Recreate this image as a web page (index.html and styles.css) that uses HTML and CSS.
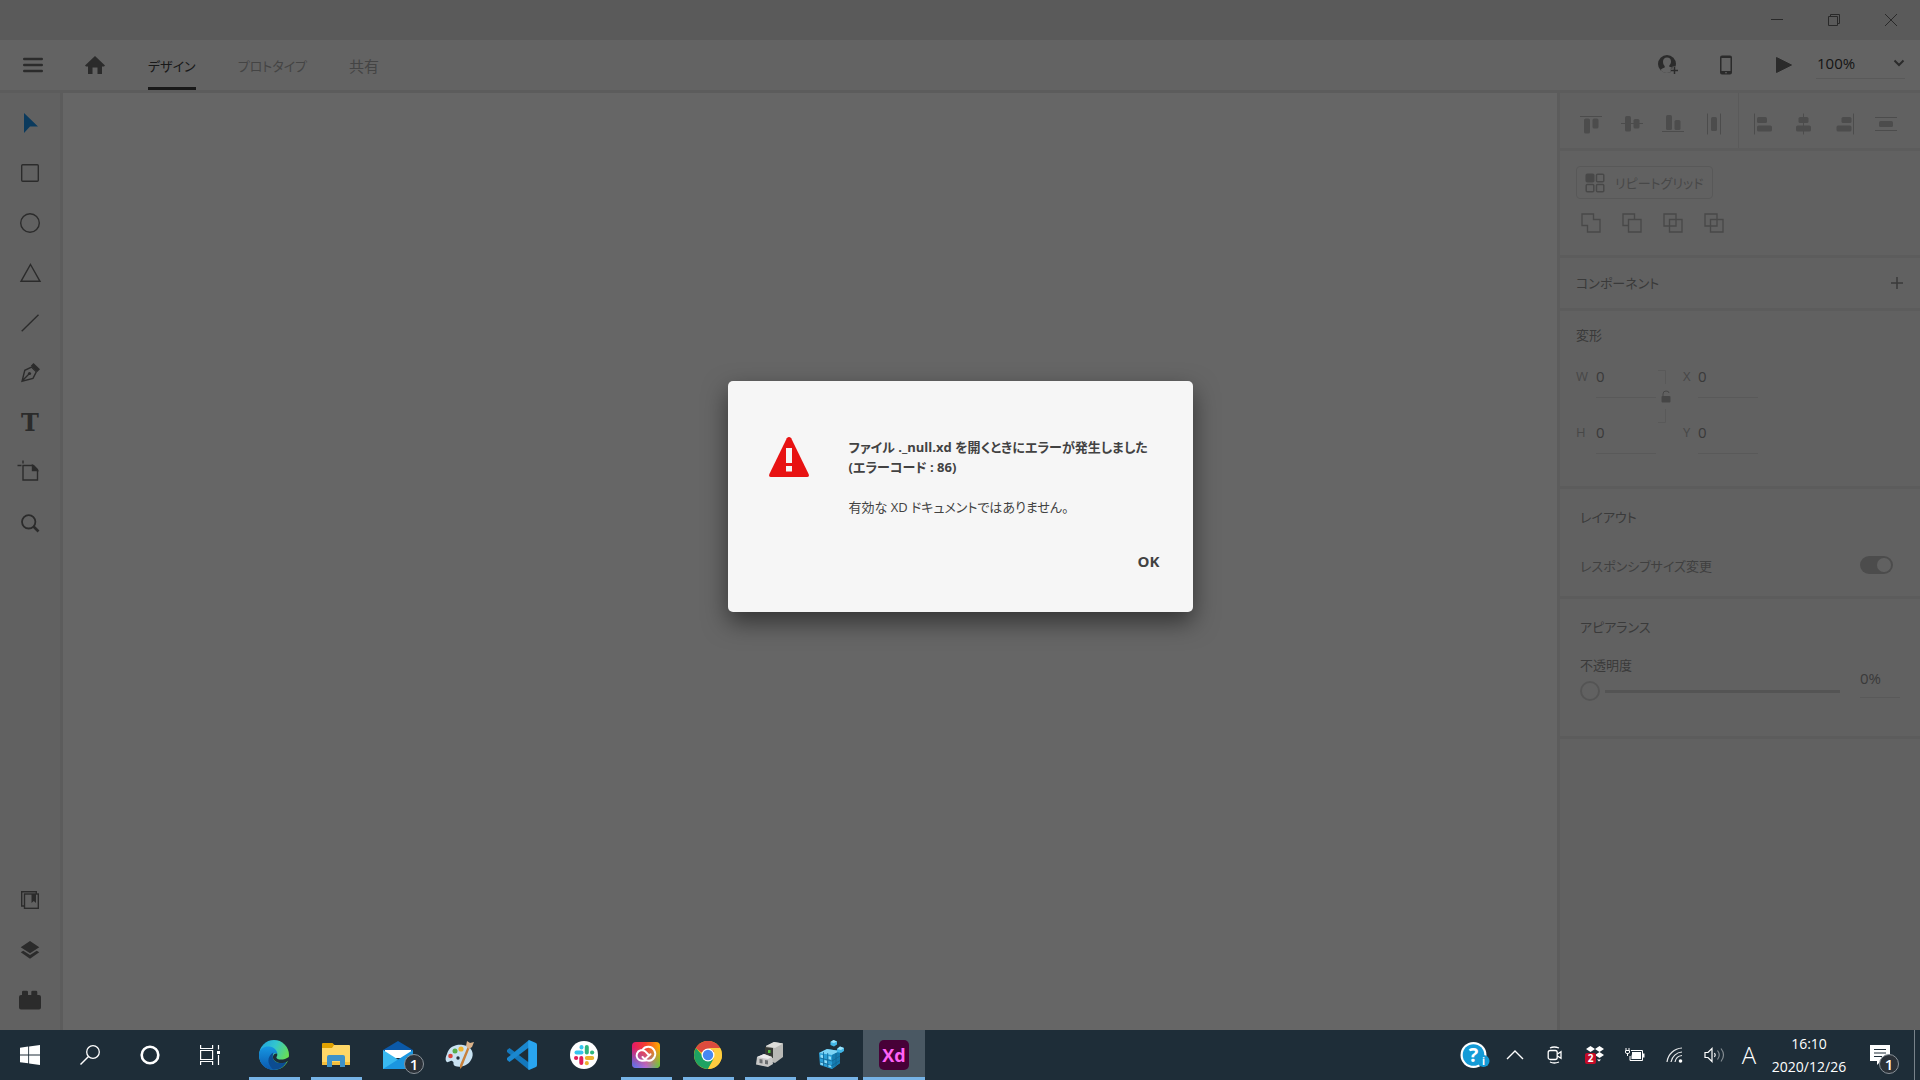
FILE: index.html
```html
<!DOCTYPE html>
<html lang="ja">
<head>
  <meta charset="UTF-8" />
  <meta name="viewport" content="width=device-width, initial-scale=1.0"/>
  <title>Adobe XD</title>
  <link rel="stylesheet" href="styles.css">
</head>
<body>

  <div class="app">
    <!-- Window title bar -->
    <div class="titlebar">
      <button aria-label="最小化"><svg width="14" height="14" viewBox="0 0 14 14"><path d="M1 6.500h12"/></svg></button>
      <button aria-label="元に戻す"><svg width="14" height="14" viewBox="0 0 14 14"><path d="M1.500 3.500h9v9h-9zM3.500 3.500v-2h9v9h-2"/></svg></button>
      <button aria-label="閉じる"><svg width="14" height="14" viewBox="0 0 14 14"><path d="M1 1l12 12M13 1L1 13"/></svg></button>
    </div>

    <!-- Header -->
    <header class="header">
      <button class="icon-btn menu-btn" aria-label="メニュー"><svg width="20" height="16" viewBox="0 0 20 16"><path d="M1.200 2h17.600M1.200 8h17.600M1.200 14h17.600" fill="none" stroke="currentColor" stroke-width="2.400" stroke-linecap="round"/></svg></button>
      <button class="icon-btn home-btn" aria-label="ホーム"><svg width="20" height="18" viewBox="0 0 20 18"><path d="M10 0L20 9.600l-1 1h-2V18h-4.500v-6.500h-5V18H3v-7.400H1l-1-1z" fill="currentColor"/></svg></button>
      <nav class="tabs">
        <a href="#" class="active">デザイン</a>
        <a href="#">プロトタイプ</a>
        <a href="#" class="share">共有</a>
      </nav>
      <div class="header-right">
        <button class="icon-btn" aria-label="招待"><svg width="22" height="22" viewBox="0 0 22 22"><circle cx="10" cy="10" r="9" fill="currentColor"/><path d="M10 3.500c-2.500 0-4 1.800-4 4.300 0 1.800.7 3.300 1.700 4.100v1.500c-1.500.7-3.400 1.200-4.200 2.500 1.500 1.800 4 3 6.500 3l3.500-.6v-3.500l2-1-3.200-1.100v-1.300c1-.9 1.700-2.300 1.700-3.900 0-2.500-1.500-4-4-4z" fill="#f7f7f7"/><path d="M17.500 12.500v8M13.500 16.500h8" stroke="#f7f7f7" stroke-width="4"/><path d="M17.500 13v7M14 16.500h7" stroke="currentColor" stroke-width="1.500"/></svg></button>
        <button class="icon-btn" aria-label="デバイスプレビュー"><svg width="12" height="20" viewBox="0 0 12 20"><path fill-rule="evenodd" d="M2 .5h8a2 2 0 0 1 2 2v15a2 2 0 0 1-2 2H2a2 2 0 0 1-2-2v-15a2 2 0 0 1 2-2zM1.500 3v13h9V3zM5 17.200v1h2v-1z" fill="currentColor"/></svg></button>
        <button class="icon-btn" aria-label="プレビュー"><svg width="18" height="18" viewBox="0 0 18 18"><path d="M1.500 1.500v15L16.500 9z" fill="currentColor" stroke="currentColor" stroke-linejoin="round"/></svg></button>
        <div class="zoom">
          <select aria-label="ズーム"><option>100%</option></select>
          <svg width="12" height="8" viewBox="0 0 12 8"><path d="M1.500 1.500L6 6l4.500-4.500" fill="none" stroke="currentColor" stroke-width="2"/></svg>
        </div>
      </div>
    </header>

    <div class="workspace">
      <!-- Tools -->
      <aside class="toolbar">
        <button class="selected" aria-label="選択"><svg width="24" height="24" viewBox="0 0 24 24"><path d="M6 2v20l6-6.600h8z" fill="currentColor"/></svg></button>
        <button aria-label="長方形"><svg width="24" height="24" viewBox="0 0 24 24"><rect x="3.700" y="3.700" width="16.600" height="16.600" rx="1"/></svg></button>
        <button aria-label="楕円形"><svg width="24" height="24" viewBox="0 0 24 24"><circle cx="12" cy="12" r="9.300"/></svg></button>
        <button aria-label="多角形"><svg width="24" height="24" viewBox="0 0 24 24"><path d="M12.500 3.500L22 20.300H3z"/></svg></button>
        <button aria-label="線"><svg width="24" height="24" viewBox="0 0 24 24"><path d="M3.700 20.300L20.500 3.700"/></svg></button>
        <button aria-label="ペン"><svg width="24" height="24" viewBox="0 0 24 24"><path d="M4 20.300l2.800-11L13.500 6l4.800 4.800-3.300 6.600zM4 20l7.500-7.500"/><circle cx="11.500" cy="12.500" r="1.600" fill="currentColor" stroke="none"/><path d="M15.500 2l6.500 6.300-2.700 2.700-6.500-6.200z" fill="currentColor" stroke="none"/></svg></button>
        <button aria-label="テキスト" class="text-tool">T</button>
        <button aria-label="アートボード"><svg width="24" height="24" viewBox="0 0 24 24"><path d="M5 4.500h10.500l4 4V19H5zM-.5 4.500h4M5-.5v3"/><path d="M14.500 4.500v5h5z" fill="currentColor"/></svg></button>
        <button aria-label="ズームツール"><svg width="24" height="24" viewBox="0 0 24 24"><circle cx="10.700" cy="10.800" r="6.700" stroke-width="1.800"/><path d="M15.500 15.500l5 5" stroke-width="2.600"/></svg></button>
        <div class="toolbar-bottom">
          <button aria-label="ライブラリ"><svg width="24" height="24" viewBox="0 0 24 24"><path d="M6.500 18H3.700V3.700h14.600v2.300"/><rect x="6.500" y="6" width="13.800" height="14.300"/><path d="M13.500 6h4.500v9l-2.200-2-2.300 2z" fill="currentColor" stroke="none"/></svg></button>
          <button aria-label="レイヤー"><svg width="24" height="24" viewBox="0 0 24 24"><path d="M12 3l9.300 6.200L12 15.300 2.700 9.200zM2.700 14.300l2.600-1.600L12 17l6.700-4.300 2.600 1.600L12 20.800z" fill="currentColor" stroke="none"/></svg></button>
          <button aria-label="プラグイン"><svg width="24" height="24" viewBox="0 0 24 24"><path d="M1 9q0-2 2-2h1V4q0-1.300 1.300-1.300h3.400Q10 2.700 10 4v3h3.300V4q0-1.300 1.300-1.300H18q1.300 0 1.300 1.300v3H21q2 0 2 2v10.500q0 2-2 2H3q-2 0-2-2z" fill="currentColor" stroke="none"/></svg></button>
        </div>
      </aside>

      <main class="canvas"></main>

      <!-- Properties -->
      <aside class="panel">
        <section class="align-section">
          <div class="align-group">
            <button aria-label="上揃え"><svg width="24" height="24" viewBox="0 0 24 24"><path d="M1 4.500h22" stroke="currentColor"/><rect x="5" y="6.500" width="6" height="15" rx="1.500"/><rect x="13.500" y="6.500" width="6" height="10" rx="1.500"/></svg></button>
            <button aria-label="中央揃え (垂直方向)"><svg width="24" height="24" viewBox="0 0 24 24"><path d="M1 11.500h22" stroke="currentColor"/><rect x="5" y="4" width="6" height="15.500" rx="1.500"/><rect x="13.500" y="7" width="6" height="9.500" rx="1.500"/></svg></button>
            <button aria-label="下揃え"><svg width="24" height="24" viewBox="0 0 24 24"><path d="M1 19.500h22" stroke="currentColor"/><rect x="5" y="3" width="6" height="15" rx="1.500"/><rect x="13.500" y="8" width="6" height="10" rx="1.500"/></svg></button>
            <button aria-label="水平方向に分布"><svg width="24" height="24" viewBox="0 0 24 24"><path d="M5.500 1.500v21M18.500 1.500v21" stroke="currentColor"/><rect x="9" y="5" width="6" height="14" rx="1.500"/></svg></button>
          </div>
          <div class="align-group">
            <button aria-label="左揃え"><svg width="24" height="24" viewBox="0 0 24 24"><path d="M3.500 1.500v21" stroke="currentColor"/><rect x="6" y="5" width="10" height="6" rx="1.500"/><rect x="6" y="13.500" width="15" height="6" rx="1.500"/></svg></button>
            <button aria-label="中央揃え (水平方向)"><svg width="24" height="24" viewBox="0 0 24 24"><path d="M11.500 1.500v21" stroke="currentColor"/><rect x="6.500" y="5" width="10" height="6" rx="1.500"/><rect x="4" y="13.500" width="15" height="6" rx="1.500"/></svg></button>
            <button aria-label="右揃え"><svg width="24" height="24" viewBox="0 0 24 24"><path d="M20.500 1.500v21" stroke="currentColor"/><rect x="8.500" y="5" width="10" height="6" rx="1.500"/><rect x="3.500" y="13.500" width="15" height="6" rx="1.500"/></svg></button>
            <button aria-label="垂直方向に分布"><svg width="24" height="24" viewBox="0 0 24 24"><path d="M1 5.500h22M1 18.500h22" stroke="currentColor"/><rect x="5" y="9" width="14" height="6" rx="1.500"/></svg></button>
          </div>
        </section>

        <section class="grid-section">
          <button class="repeat-btn">
            <svg width="20" height="20" viewBox="0 0 20 20" fill="none" stroke="currentColor" stroke-width="1.500"><rect x="1.200" y="1.200" width="7.600" height="7.600" rx="1" fill="currentColor"/><rect x="11.500" y="1.200" width="7.300" height="7.600" rx="1"/><rect x="1.200" y="11.500" width="7.600" height="7.300" rx="1"/><rect x="11.500" y="11.500" width="7.300" height="7.300" rx="1"/></svg>
            リピートグリッド
          </button>
          <div class="path-ops">
            <button aria-label="合体"><svg width="20" height="20" viewBox="0 0 20 20"><path d="M1 1h11.500v5.500H19V19H6.500v-6.500H1z"/></svg></button>
            <button aria-label="前面オブジェクトで型抜き"><svg width="20" height="20" viewBox="0 0 20 20"><path d="M12.500 6.500V1H1v11.500h5.500M6.500 6.500H19V19H6.500z"/></svg></button>
            <button aria-label="交差"><svg width="20" height="20" viewBox="0 0 20 20"><path d="M1 1h12v12H1zM6.500 6.500H19V19H6.500z"/></svg></button>
            <button aria-label="中マド"><svg width="20" height="20" viewBox="0 0 20 20"><path d="M1 1h12v12H1zM6.500 6.500H19V19H6.500z"/></svg></button>
          </div>
        </section>

        <section class="component-section">
          <h2>コンポーネント</h2>
          <button aria-label="コンポーネントを追加"><svg width="14" height="14" viewBox="0 0 14 14"><path d="M7 1v12M1 7h12" stroke="currentColor" stroke-width="1.500"/></svg></button>
        </section>

        <section class="transform-section">
          <h2>変形</h2>
          <div class="transform-grid">
            <label for="w">W</label><input type="text" id="w" value="0">
            <svg class="lock" width="20" height="100" viewBox="0 0 20 100"><path d="M2 16.500h7.500V30M9.500 55v13.500H2" fill="none" stroke="#dedede"/><path d="M7 43v-3q0-3 3-3t3 2" fill="none" stroke="#b0b0b0"/><rect x="5.500" y="42" width="9" height="6.500" rx="1" fill="#b0b0b0"/></svg>
            <label for="x">X</label><input type="text" id="x" value="0">
            <label for="h">H</label><input type="text" id="h" value="0">
            <label for="y">Y</label><input type="text" id="y" value="0">
          </div>
        </section>

        <section class="layout-section">
          <h2>レイアウト</h2>
          <div class="toggle-row">
            <label for="responsive">レスポンシブサイズ変更</label>
            <input type="checkbox" id="responsive" class="toggle" checked>
          </div>
        </section>

        <section class="appearance-section">
          <h2>アピアランス</h2>
          <div class="opacity-row">
            <div class="opacity-slider">
              <label for="opacity">不透明度</label>
              <input type="range" id="opacity" min="0" max="100" value="0">
            </div>
            <input type="text" class="opacity-value" aria-label="不透明度の値" value="0%">
          </div>
        </section>
      </aside>
    </div>

    <!-- Error dialog -->
    <div class="overlay">
      <div class="dialog" role="alertdialog" aria-labelledby="dialog-title">
        <svg class="alert-icon" width="40" height="40" viewBox="0 0 40 40"><path d="M17.800 1.300q2.200-2.600 4.400 0L39.600 37q1 3-1.600 3H2q-2.600 0-1.600-3z" fill="#e81313"/><path d="M17 11h6v15h-6zM17 29h6v5.500h-6z" fill="#f6f6f6"/></svg>
        <div class="dialog-body">
          <h1 id="dialog-title">ファイル ._null.xd を開くときにエラーが発生しました<br>(エラーコード : 86)</h1>
          <p>有効な XD ドキュメントではありません。</p>
          <button class="ok-btn">OK</button>
        </div>
      </div>
    </div>
  </div>

  <!-- Taskbar -->
  <footer class="taskbar">
    <div class="system-buttons">
      <button aria-label="スタート"><svg width="20" height="20" viewBox="0 0 20 20"><path d="M0 2.700l8.200-1.100v7.900H0zM9.100 1.500L20 0v9.500H9.100zM0 10.400h8.200v7.900L0 17.200zM9.100 10.400H20V20L9.100 18.500z" fill="#fff"/></svg></button>
      <button aria-label="検索"><svg width="20" height="20" viewBox="0 0 20 20"><circle cx="13" cy="7" r="6.300" fill="none" stroke="#fff" stroke-width="1.300"/><path d="M8.500 11.500L.5 19.500" stroke="#fff" stroke-width="1.400"/></svg></button>
      <button aria-label="Cortana"><svg width="20" height="20" viewBox="0 0 20 20"><circle cx="10" cy="10" r="8.300" fill="none" stroke="#fff" stroke-width="2.600"/></svg></button>
      <button aria-label="タスクビュー"><svg width="20" height="20" viewBox="0 0 20 20" fill="none" stroke="#fff" stroke-width="1.200"><path d="M.6 0v3.500h12V0M.6 5.500h12v9H.6zM.6 20v-3.500h12V20M18.500 0v4.500M18.500 10v10"/><path d="M17 6h3v3h-3z" fill="#fff" stroke="none"/></svg></button>
    </div>
    <div class="task-buttons">
      <button class="running" aria-label="Edge"><svg width="30" height="30" viewBox="0 0 30 30">
        <defs>
          <linearGradient id="edge-top" x1="0" y1="0" x2="1" y2=".5"><stop offset="0" stop-color="#1f9fe0"/><stop offset=".5" stop-color="#32c5cf"/><stop offset="1" stop-color="#6be14c"/></linearGradient>
          <linearGradient id="edge-blue" x1="0" y1="0" x2="0" y2="1"><stop offset="0" stop-color="#1797e3"/><stop offset="1" stop-color="#0b58ad"/></linearGradient>
        </defs>
        <circle cx="15" cy="15" r="15" fill="url(#edge-top)"/>
        <path d="M0 14C1 8 6 6 10 6.500c5 .5 8 3.500 8.500 7.500-2-2-5-1-5.500 2-.5 4 3 7 7 7 3 0 6-1 8-2.500C25.500 27 20 30 15 30 7 30 0 24 0 15z" fill="url(#edge-blue)"/>
        <path d="M14.500 12.500c-5 2.500-8 9.500-1 16.500 7 1.500 12.500-3 14.500-8-7 4.500-13 1-14-3-.5-2.500 0-4 .5-5.500z" fill="#0c4c91"/>
        <path d="M18 13.500c1 2-.6 3-.6 4 0 1.500 3.600 3 8.600 1.500l4-2v3l-1 1c-6 4-14 1.500-15-3-.5-3 1.500-5 4-4.500z" fill="#1d2d38"/>
      </svg></button>
      <button class="running" aria-label="エクスプローラー"><svg width="28" height="24" viewBox="0 0 28 24"><path d="M0 1q0-1 1-1h9.500L13 2.500V8H0z" fill="#e0a100"/><path d="M12 2h15q1 0 1 1v19H0V5h10z" fill="#ffd767"/><path d="M0 19h28v3H0z" fill="#f5bf3c"/><path d="M5 14q0-2 2-2h14q2 0 2 2v10h-5v-6h-8v6H5z" fill="#3e92c9"/></svg></button>
      <button aria-label="メール" class="badged"><svg width="30" height="28" viewBox="0 0 30 28"><path d="M0 9L15 0l15 9v6H0z" fill="#0b59a8"/><path d="M2 9h26v8H2z" fill="#fff"/><path d="M0 9l15 9.500V28H0z" fill="#39b9f0"/><path d="M30 9v19H0z" fill="#1b96e0"/><path d="M2 9h26L15 17z" fill="#fff"/></svg><span class="badge">1</span></button>
      <button aria-label="ペイント"><svg width="30" height="30" viewBox="0 0 30 30"><path d="M2 14C4 6 12 4 18 5c9 1 12 9 8 15-3 6-11 8-16 6-3-2 0-4-3-5-2-1-4 3-6 0-1-2 0-5 1-7z" fill="#c9e2f2"/><circle cx="5.500" cy="16" r="2.300" fill="#d9463c"/><circle cx="10" cy="11" r="2.500" fill="#59ad4b"/><circle cx="16" cy="9" r="2.600" fill="#efb32e"/><circle cx="13" cy="18" r="1.700" fill="#25333e"/><path d="M23 6l2 1-8 20-2 2v-4z" fill="#c8813c"/><path d="M22 1l3 2 4-1-2 5-3 2-3-3z" fill="#dbb38b"/></svg></button>
      <button aria-label="Visual Studio Code"><svg width="30" height="30" viewBox="0 0 30 30"><path d="M0 10l2.500-2 20 15-.5 7L0 12z" fill="#1478bd"/><path d="M0 20l2.500 2 20-15L22 0 0 18z" fill="#1a87cf"/><path d="M22 0l7 3q1 .5 1 2v20q0 1.500-1 2l-7 3q-1-.5-.8-2V2q0-1.500.8-2z" fill="#29a4ef"/></svg></button>
      <button aria-label="Slack"><svg width="28" height="28" viewBox="0 0 28 28"><circle cx="14" cy="14" r="14" fill="#fff"/><g stroke-width="4" stroke-linecap="round"><path d="M6.500 11.500h5" stroke="#36c5f0"/><path d="M11.500 6v.5" stroke="#36c5f0"/><path d="M16.800 6v5.500" stroke="#2eb67d"/><path d="M22 11.500h.2" stroke="#2eb67d"/><path d="M16.800 17h5.400" stroke="#ecb22e"/><path d="M16.800 22v.2" stroke="#ecb22e"/><path d="M11.300 17v5" stroke="#e01e5a"/><path d="M6 17h.2" stroke="#e01e5a"/></g></svg></button>
      <button class="running" aria-label="Creative Cloud"><svg width="28" height="26" viewBox="0 0 28 26">
        <defs><linearGradient id="cc-top" x1="0" y1="0" x2="1" y2="0"><stop offset="0" stop-color="#e4186a"/><stop offset=".5" stop-color="#f5402c"/><stop offset="1" stop-color="#ffb000"/></linearGradient><linearGradient id="cc-bottom" x1="0" y1="0" x2="1" y2="0"><stop offset="0" stop-color="#4a7cf5"/><stop offset=".5" stop-color="#b36bd8"/><stop offset="1" stop-color="#54cc3e"/></linearGradient><linearGradient id="cc-fade" x1="0" y1="0" x2="0" y2="1"><stop offset=".2" stop-color="#fff" stop-opacity="0"/><stop offset="1" stop-color="#fff"/></linearGradient><mask id="cc-mask"><path d="M0 0h28v26H0z" fill="url(#cc-fade)"/></mask></defs>
        <rect width="28" height="26" rx="4" fill="url(#cc-top)"/><rect width="28" height="26" rx="4" fill="url(#cc-bottom)" mask="url(#cc-mask)"/>
        <g fill="none" stroke="#fff" stroke-width="2" stroke-linecap="round"><path d="M13.500 18.500l-3.500.3a5.300 5.300 0 1 1 3.500-9.200l3 3.200"/><path d="M10.500 7.800a7 7 0 1 1 6.500 11c-2 0-3.500-.8-4.500-1.800l-2-2"/><path d="M13 17.200l5.500-5"/></g></svg></button>
      <button class="running" aria-label="Chrome"><svg width="28" height="28" viewBox="0 0 28 28"><circle cx="14" cy="14" r="14" fill="#fbc116"/><path d="M14 14L1.900 7A14 14 0 0 1 26.100 7z" fill="#dd4b3e"/><path d="M14 14h-6L1.900 7A14 14 0 0 0 14 28l5.500-10z" fill="#1ea362"/><path d="M14 7h12.100q1.900 3.400 1.900 7A14 14 0 0 1 14 28l6-10.500V10z" fill="#ffcd40"/><path d="M1.900 7A14 14 0 0 1 26.100 7H14a7 7 0 0 0-6.500 4.500z" fill="#dd4b3e"/><circle cx="14" cy="14" r="6.500" fill="#fff"/><circle cx="14" cy="14" r="5.200" fill="#4688f1"/></svg></button>
      <button class="running" aria-label="USB"><svg width="28" height="26" viewBox="0 0 28 26"><path d="M10 4l8-4 9 1.500V15l-8 6-9-3z" fill="#b9b9b6"/><path d="M10 4l8-4 9 1.500L19 6z" fill="#dededb"/><path d="M9 5l8 1v10l-8-1.500z" fill="#373a36"/><path d="M12 8h2.500v3H12z" fill="#56c440"/><path d="M1 15l7-3 8 3 1 7-5 3-12-2.500z" fill="#c7c7c6"/><path d="M1 15l7-3 8 3-4 2z" fill="#ededed"/><path d="M3.500 17l3 .5v4l-3-.5zM9 18l3 .5v4L9 22z" fill="#6c6f71"/></svg></button>
      <button class="running" aria-label="レジストリ エディター"><svg width="28" height="30" viewBox="0 0 28 30"><path d="M1 13l8-4 13 2v12l-8 6-12-4z" fill="#2a9fd6"/><path d="M1 13l8-4 13 2-8 4z" fill="#7dd4f5"/><path d="M14 15l8-4v12l-8 6z" fill="#157cb0"/><path d="M2.500 14.500l2.500.7v3L2.500 17.500zM10.500 16l2.500.7v3l-2.500-.7zM6.500 20l2.500.7v3L6.500 23zM2.500 22l2.500.7v2.600l-2.500-.7zM10.500 24l2.500.7v2.600l-2.500-.7z" fill="#8edbf7"/><path d="M5.500 12v14M9.700 13v14M18 13v13M2 18l12 3 8-5M2 22l12 3.500 8-5" stroke="#126694" stroke-width=".8" fill="none"/><path d="M12.500 2l3-2L19 1.500v3L16 6.500l-3.500-1.500zM19 9l3-2.500 4 1.500v3l-3 2-4-1z" fill="#41b5e6"/><path d="M12.500 2l3-2L19 1.500 16 3zM19 9l3-2.500L26 8l-3 2z" fill="#9ee3fb"/></svg></button>
      <button class="running current" aria-label="Adobe XD"><svg width="30" height="30" viewBox="0 0 30 30"><rect width="30" height="30" rx="5" fill="#470137"/><text x="15" y="22" text-anchor="middle" font-family="Open Sans" font-weight="700" font-size="18" fill="#ff61f6">Xd</text></svg></button>
    </div>

    <div class="tray">
      <button aria-label="ヘルプ"><svg width="30" height="28" viewBox="0 0 30 28"><circle cx="13.500" cy="14" r="13" fill="#fff"/><circle cx="13.500" cy="14" r="10.800" fill="#149bd7"/><text x="13.500" y="21" text-anchor="middle" font-family="Open Sans" font-weight="700" font-size="20" fill="#fff">?</text><circle cx="23.500" cy="20" r="6" fill="#149bd7"/><text x="23.500" y="24" text-anchor="middle" font-family="Open Sans" font-weight="700" font-size="10" fill="#fff">i</text></svg></button>
      <button aria-label="隠れているインジケーター"><svg width="18" height="10" viewBox="0 0 18 10"><path d="M1 9l8-8 8 8" fill="none" stroke="#fff" stroke-width="1.400"/></svg></button>
      <button aria-label="会議"><svg width="16" height="18" viewBox="0 0 16 18" fill="none" stroke="#fff" stroke-width="1.300"><rect x="1.200" y="4.500" width="9" height="9" rx="2"/><path d="M10.500 8l3.500-2.200v6.500L10.500 10M3 2q4-2 9 0M3 16q4 2 9 0"/></svg></button>
      <button aria-label="Dropbox"><svg width="20" height="20" viewBox="0 0 20 20"><path d="M5.500 1l4.500 3-4.500 3L1 4zM14.500 1L19 4l-4.500 3L10 4zM14.500 7l4.500 3-4.500 3-4.500-3zM12 14.500h4L14 16.500z" fill="#fff"/><rect y="8" width="11" height="11" rx="2" fill="#c40b28"/><text x="5.500" y="17" text-anchor="middle" font-family="Open Sans" font-weight="700" font-size="10" fill="#fff">2</text></svg></button>
      <button aria-label="電源"><svg width="20" height="14" viewBox="0 0 20 14"><path d="M6 2.500h11.500v10H5V8" fill="none" stroke="#fff"/><path d="M7 4h9v7H6.500V8L7 6zM18 5.500h1.500v4H18z" fill="#fff"/><path d="M1 0v2M4 0v2M.5 2.500h4v2.300q-2 2-4 0zM2.500 5v3" fill="none" stroke="#fff"/></svg></button>
      <button aria-label="Wi-Fi"><svg width="18" height="18" viewBox="0 0 18 18" fill="none" stroke="#fff" stroke-width="1.200"><path d="M1 16A16 16 0 0 1 16 2M5 16A12 12 0 0 1 16 6M9 16a8 8 0 0 1 7-6.500" opacity=".9"/><circle cx="14.500" cy="15" r="1.800" fill="#fff" stroke="none"/></svg></button>
      <button aria-label="音量"><svg width="22" height="18" viewBox="0 0 22 18" fill="none" stroke="#fff" stroke-width="1.200"><path d="M1 6.500h3l4-4v13l-4-4H1z"/><path d="M10.500 7q1.500 2 0 4"/><path d="M13.500 4.500q3.500 4.500 0 9M17 2.500q5 6.500 0 13" opacity=".45"/></svg></button>
      <button class="ime" aria-label="入力モード">A</button>
      <button class="clock"><span>16:10</span><span>2020/12/26</span></button>
      <button aria-label="通知" class="notice badged"><svg width="20" height="20" viewBox="0 0 20 20"><path d="M0 0h20v16h-9l-4 4v-4H0z" fill="#fff"/><path d="M4 4.500h12M4 8h12M4 11.500h8" stroke="#1e2d38" stroke-width="1.200"/></svg><span class="badge">1</span></button>
      <button class="show-desktop" aria-label="デスクトップの表示"></button>
    </div>
  </footer>

</body>
</html>
```

FILE: styles.css
```css
* {
  box-sizing: border-box;
}

body {
  margin: 0;
  height: 100vh;
  display: flex;
  flex-direction: column;
  overflow: hidden;
  font-family: "Open Sans", "Noto Sans CJK JP", sans-serif;
  font-feature-settings: "palt";
  font-size: 13px;
  line-height: 20px;
  color: #919191;
}

button,
input,
select {
  font: inherit;
  font-feature-settings: inherit;
  color: inherit;
  background: none;
  border: none;
  border-radius: 0;
  padding: 0;
  margin: 0;
}

button {
  display: flex;
  align-items: center;
  justify-content: center;
  cursor: pointer;
}

h1,
h2,
p {
  margin: 0;
  font-size: 13px;
  font-weight: normal;
}

svg {
  display: block;
  flex-shrink: 0;
}

.app {
  position: relative;
  flex: 1;
  min-height: 0;
  display: flex;
  flex-direction: column;
  background-color: #f7f7f7;
}

/* Title bar */
.titlebar {
  height: 40px;
  display: flex;
  justify-content: flex-end;
  padding-right: 1px;
  background-color: #e1e1e1;
}

.titlebar button {
  width: 57px;
}

.titlebar svg {
  fill: none;
  stroke: #666;
}

/* Header */
.header {
  height: 53px;
  display: flex;
  border-bottom: 3px solid #e6e6e6;
  color: #6b6b6b;
}

.icon-btn {
  width: 58px;
}

.menu-btn {
  width: 66px;
}

.tabs {
  display: flex;
  gap: 42px;
  margin-left: 24px;
}

.tabs a {
  display: flex;
  align-items: center;
  padding-top: 4px;
  border-bottom: 3px solid transparent;
  color: #aaa;
  text-decoration: none;
}

.tabs .active {
  color: #404040;
  border-bottom-color: #404040;
}

.tabs .share {
  font-size: 15px;
}

.header-right {
  margin-left: auto;
  display: flex;
  padding-right: 15px;
}

.zoom {
  display: flex;
  align-items: center;
  width: 89px;
  height: 31px;
  margin-top: 8px;
  margin-left: 3px;
  border-bottom: 1px solid #dedede;
}

.zoom select {
  flex: 1;
  padding: 0 1px;
  appearance: none;
  font-size: 15px;
  color: #383838;
}

/* Tools */
.workspace {
  flex: 1;
  min-height: 0;
  display: flex;
}

.toolbar {
  width: 63px;
  display: flex;
  flex-direction: column;
  padding: 5px 0;
  background-color: #f3f3f3;
  border-right: 3px solid #e6e6e6;
  color: #6b6b6b;
}

.toolbar button {
  width: 60px;
  height: 50px;
}

.toolbar svg {
  overflow: visible;
  fill: none;
  stroke: currentColor;
  stroke-width: 1.4;
}

.toolbar .selected {
  color: #1c92e8;
}

.toolbar .selected svg {
  stroke: none;
}

.toolbar .text-tool {
  font-family: "DejaVu Serif", serif;
  font-size: 24px;
  font-weight: bold;
}

.toolbar-bottom {
  margin-top: auto;
}

.canvas {
  flex: 1;
  background-color: #fff;
}

/* Properties */
.panel {
  width: 363px;
  background-color: #f3f3f3;
  border-left: 3px solid #e6e6e6;
}

.panel section {
  border-bottom: 3px solid #e6e6e6;
}

.align-section {
  display: flex;
  height: 58px;
}

.align-group {
  display: flex;
  align-items: center;
  gap: 17px;
  padding: 6px 12px 0;
  color: #bebebe;
}

.align-group:first-child {
  padding-left: 19px;
  border-right: 1px solid #e2e2e2;
}

.align-group svg {
  fill: currentColor;
}

.grid-section {
  padding: 15px 16px 22px;
  color: #b4b4b4;
}

.repeat-btn {
  height: 33px;
  gap: 10px;
  padding: 0 8px;
  border: 1px solid #dcdcdc;
  border-radius: 4px;
}

.path-ops {
  display: flex;
  gap: 21px;
  padding: 14px 5px 0;
}

.path-ops svg {
  fill: none;
  stroke: currentColor;
  stroke-width: 1.4;
}

.component-section {
  display: flex;
  align-items: center;
  justify-content: space-between;
  height: 53px;
  padding: 0 16px;
}

.transform-section {
  padding: 14px 16px 32px;
}

.transform-grid {
  display: grid;
  grid-template-columns: 20px 60px 27px 15px 60px;
  row-gap: 12px;
  margin-top: 9px;
}

.transform-grid label {
  align-self: center;
  font-size: 13px;
  color: #b2b2b2;
}

.transform-grid input {
  width: 100%;
  height: 44px;
  font-size: 15px;
  border-bottom: 1px solid #dedede;
}

.transform-grid .lock {
  grid-row: span 2;
}

.layout-section,
.appearance-section {
  padding-left: 20px;
}

.layout-section {
  padding-top: 18px;
  padding-bottom: 20px;
}

.toggle-row {
  display: flex;
  justify-content: space-between;
  padding-right: 27px;
  margin-top: 29px;
  color: #a0a0a0;
}

.toggle {
  position: relative;
  appearance: none;
  width: 33px;
  height: 18px;
  border-radius: 9px;
  background-color: #bebebe;
}

.toggle::after {
  content: "";
  position: absolute;
  top: 2px;
  right: 2px;
  width: 14px;
  height: 14px;
  border-radius: 50%;
  background-color: #f3f3f3;
}

.appearance-section {
  padding-top: 18px;
  padding-bottom: 35px;
}

.opacity-row {
  display: flex;
  align-items: center;
  gap: 20px;
  margin-top: 18px;
}

.opacity-slider {
  display: flex;
  flex-direction: column;
  gap: 6px;
  width: 260px;
}

.opacity-slider input {
  appearance: none;
  width: 100%;
  height: 20px;
  background: linear-gradient(#d2d2d2, #d2d2d2) right center / calc(100% - 25px) 3px no-repeat;
}

.opacity-slider input::-webkit-slider-thumb {
  appearance: none;
  width: 20px;
  height: 20px;
  border: 2px solid #d2d2d2;
  border-radius: 50%;
  background-color: #f3f3f3;
}

.opacity-value {
  width: 40px;
  height: 40px;
  font-size: 15px;
  border-bottom: 1px solid #dedede;
}

/* Error dialog */
.overlay {
  position: absolute;
  inset: 0;
  display: flex;
  align-items: center;
  justify-content: center;
  padding-bottom: 37px;
  background-color: rgba(0, 0, 0, 0.6);
}

.dialog {
  display: flex;
  gap: 40px;
  padding: 56px 32px 36px 41px;
  border-radius: 5px;
  background-color: #f6f6f6;
  box-shadow: 0 10px 24px rgba(0, 0, 0, 0.5);
  color: #424242;
}

.dialog-body {
  display: flex;
  flex-direction: column;
  width: 312px;
}

.dialog h1 {
  font-weight: bold;
  white-space: nowrap;
  margin-bottom: 20px;
}

.ok-btn {
  align-self: flex-end;
  margin-top: 29px;
  margin-right: 1px;
  height: 30px;
  font-size: 15px;
  font-weight: bold;
}

/* Taskbar */
.taskbar {
  height: 50px;
  display: flex;
  background-color: #1e2d38;
  font-size: 14px;
  color: #fff;
}

.system-buttons,
.task-buttons,
.tray {
  display: flex;
}

.system-buttons button {
  width: 60px;
}

.task-buttons {
  margin-left: 3px;
}

.task-buttons button {
  position: relative;
  width: 62px;
}

.task-buttons .running::after {
  content: "";
  position: absolute;
  left: 6px;
  right: 5px;
  bottom: 0;
  height: 3px;
  background-color: #76b3e6;
}

.task-buttons .current {
  background-color: #4a5863;
}

.task-buttons .current::after {
  left: 0;
  right: 0;
}

.badged {
  position: relative;
}

.badge {
  position: absolute;
  left: 37px;
  top: 24px;
  width: 20px;
  height: 20px;
  border: 1px solid #8a9299;
  border-radius: 50%;
  background-color: #2b3138;
  font-size: 15px;
  font-weight: 600;
  line-height: 18px;
  text-align: center;
}

.tray {
  margin-left: auto;
}

.tray button {
  width: 40px;
}

.tray .ime {
  width: 28px;
  font-size: 24px;
  font-weight: 300;
}

.tray .clock {
  flex-direction: column;
  gap: 3px;
  width: 92px;
}

.tray .notice {
  width: 49px;
}

.notice .badge {
  left: 24px;
}

.tray .show-desktop {
  width: 6px;
  margin-left: 10px;
  border-left: 1px solid #78828a;
}
```
